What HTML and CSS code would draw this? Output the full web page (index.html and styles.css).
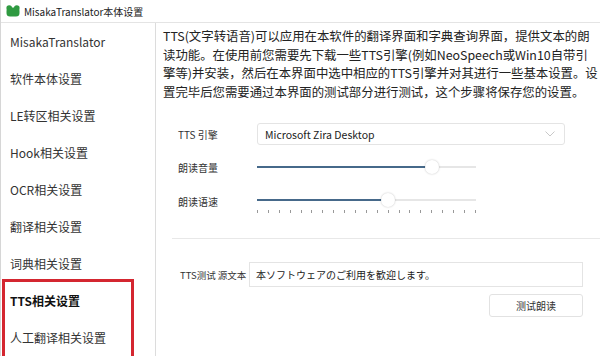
FILE: index.html
```html
<!DOCTYPE html>
<html lang="zh-CN">
<head>
    <meta charset="UTF-8">
    <title>MisakaTranslator本体设置</title>
    <link rel="stylesheet" href="styles.css">
</head>
<body>
    <div class="window">
        <div class="titlebar">
            <svg class="app-icon" width="14" height="12" viewBox="0 0 14 12">
                <circle cx="3.2" cy="3" r="2.8" fill="#2f9a41"/>
                <circle cx="10.8" cy="3" r="2.8" fill="#2f9a41"/>
                <rect x="0.5" y="2.5" width="13" height="9" rx="3.5" fill="#2f9a41"/>
            </svg>
            <span class="title">MisakaTranslator本体设置</span>
        </div>

        <div class="main">
            <nav class="sidebar">
                <div class="nav-item">MisakaTranslator</div>
                <div class="nav-item">软件本体设置</div>
                <div class="nav-item">LE转区相关设置</div>
                <div class="nav-item">Hook相关设置</div>
                <div class="nav-item">OCR相关设置</div>
                <div class="nav-item">翻译相关设置</div>
                <div class="nav-item">词典相关设置</div>
                <div class="highlight">
                    <div class="nav-item active">TTS相关设置</div>
                    <div class="nav-item">人工翻译相关设置</div>
                </div>
            </nav>

            <section class="content">
                <p class="intro">
                    TTS(文字转语音)可以应用在本软件的翻译界面和字典查询界面，提供文本的朗<br>
                    读功能。在使用前您需要先下载一些TTS引擎(例如NeoSpeech或Win10自带引<br>
                    擎等)并安装，然后在本界面中选中相应的TTS引擎并对其进行一些基本设置。设<br>
                    置完毕后您需要通过本界面的测试部分进行测试，这个步骤将保存您的设置。
                </p>

                <div class="form">
                    <div class="row">
                        <label class="label">TTS 引擎</label>
                        <div class="select">
                            <span>Microsoft Zira Desktop</span>
                            <svg width="10" height="6" viewBox="0 0 10 6">
                                <polyline points="0.5,0.5 5,5 9.5,0.5" fill="none" stroke="#c8c8c8" stroke-width="1"/>
                            </svg>
                        </div>
                    </div>
                    <div class="row row-slider">
                        <label class="label">朗读音量</label>
                        <div class="slider">
                            <div class="track"><div class="fill" style="width: 79%"></div></div>
                            <div class="thumb" style="left: 80%"></div>
                        </div>
                    </div>
                    <div class="row row-slider">
                        <label class="label">朗读语速</label>
                        <div class="slider-wrap">
                            <div class="slider">
                                <div class="track"><div class="fill" style="width: 58%"></div></div>
                                <div class="thumb" style="left: 60%"></div>
                            </div>
                            <div class="ticks">
                                <i></i><i></i><i></i><i></i><i></i><i></i><i></i>
                                <i></i><i></i><i></i><i></i><i></i><i></i><i></i>
                                <i></i><i></i><i></i><i></i><i></i><i></i><i></i>
                            </div>
                        </div>
                    </div>
                </div>

                <hr class="divider">

                <div class="test">
                    <div class="test-row">
                        <label class="test-label">TTS测试 源文本</label>
                        <div class="input">本ソフトウェアのご利用を歓迎します。</div>
                    </div>
                    <div class="actions">
                        <button class="btn">测试朗读</button>
                    </div>
                </div>
            </section>
        </div>
    </div>
</body>
</html>
```

FILE: styles.css
```css
body {
    margin: 0;
    font-family: "Noto Sans CJK SC", "Noto Sans", sans-serif;
    color: #222;
    background: #fff;
    overflow: hidden;
}

.window {
    width: 600px;
    height: 356px;
    display: flex;
    flex-direction: column;
    border-left: 1px solid #d6d6d6;
    box-sizing: border-box;
}

.titlebar {
    height: 22px;
    display: flex;
    align-items: center;
    gap: 4px;
    padding-left: 5px;
    border-bottom: 1px solid #e4e4e4;
    flex-shrink: 0;
}

.title {
    font-size: 10px;
    color: #222;
}

.main {
    display: flex;
    flex: 1;
    min-height: 0;
}

/* 左侧导航 */
.sidebar {
    width: 154px;
    border-right: 1px solid #dcdcdc;
    flex-shrink: 0;
}

.nav-item {
    height: 37px;
    line-height: 37px;
    padding-left: 9px;
    font-size: 12px;
    color: #333;
    white-space: nowrap;
}

.nav-item.active {
    font-weight: bold;
    color: #111;
}

.highlight {
    width: 126px;
    margin: -3px 0 0 1px;
    border: 3px solid #d42630;
    border-bottom: none;
}

.highlight .nav-item {
    padding-left: 5px;
}

/* 右侧内容 */
.content {
    flex: 1;
    padding: 4px 0 0 7px;
    min-width: 0;
}

.intro {
    margin: 0;
    font-size: 12.4px;
    line-height: 18.5px;
    color: #222;
    white-space: nowrap;
}

.form {
    margin: 22px 0 0 15px;
    display: flex;
    flex-direction: column;
}

.row {
    display: flex;
    align-items: center;
}

.row-slider {
    margin-top: 14px;
}

.row-slider + .row-slider {
    margin-top: 17px;
    align-items: flex-start;
}

.label {
    width: 79px;
    font-size: 10px;
    color: #333;
    flex-shrink: 0;
}

.row-slider + .row-slider .label {
    padding-top: 2px;
}

.select {
    width: 308px;
    height: 22px;
    border: 1px solid #e4e4e4;
    border-radius: 3px;
    box-sizing: border-box;
    display: flex;
    align-items: center;
    justify-content: space-between;
    padding: 0 9px 0 7px;
    font-size: 10.5px;
    color: #222;
}

.slider {
    position: relative;
    width: 219px;
    height: 16px;
    display: flex;
    align-items: center;
}

.track {
    width: 100%;
    height: 2px;
    background: #e6e6e6;
}

.fill {
    height: 100%;
    background: #46698a;
}

.thumb {
    position: absolute;
    top: 1px;
    width: 14px;
    height: 14px;
    margin-left: -7px;
    border-radius: 50%;
    background: #fff;
    box-shadow: 0 0 2px rgba(0, 0, 0, 0.25);
    box-sizing: border-box;
}

.ticks {
    width: 219px;
    height: 3px;
    display: flex;
    justify-content: space-between;
    margin-top: 2px;
}

.ticks i {
    display: block;
    width: 1px;
    height: 3px;
    background: #999;
}

.divider {
    margin: 25px 0 0 9px;
    border: none;
    border-top: 1px solid #e8e8e8;
}

.test {
    margin: 23px 0 0 17px;
    width: 403px;
}

.test-row {
    display: flex;
    align-items: center;
}

.test-label {
    width: 69px;
    font-size: 9.5px;
    color: #333;
    white-space: nowrap;
    flex-shrink: 0;
}

.input {
    flex: 1;
    height: 25px;
    line-height: 23px;
    border: 1px solid #e4e4e4;
    box-sizing: border-box;
    padding-left: 6px;
    font-size: 10px;
    color: #222;
}

.actions {
    display: flex;
    justify-content: flex-end;
    margin-top: 7px;
}

.btn {
    width: 94px;
    height: 23px;
    border: 1px solid #e2e2e2;
    border-radius: 3px;
    background: #fff;
    font-family: inherit;
    font-size: 10px;
    color: #333;
    padding: 0;
}
```
